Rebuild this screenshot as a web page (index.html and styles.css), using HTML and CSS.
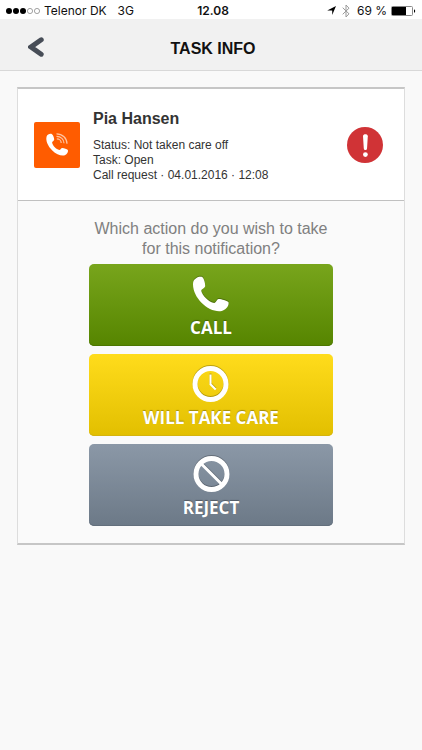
FILE: index.html
```html
<!DOCTYPE html>
<html lang="en">
<head>
<meta charset="utf-8">
<meta name="viewport" content="width=device-width, initial-scale=1">
<title>Task info</title>
<link rel="stylesheet" href="styles.css">
</head>
<body>
<div class="status-bar">
  <div class="status-left">
    <svg class="signal" viewBox="0 0 35 8" aria-hidden="true">
      <circle cx="3" cy="4" r="3"/><circle cx="10" cy="4" r="3"/><circle cx="17" cy="4" r="3"/>
      <circle class="empty" cx="24" cy="4" r="2.6"/><circle class="empty" cx="31" cy="4" r="2.6"/>
    </svg>
    <span>Telenor DK</span>
    <span class="network">3G</span>
  </div>
  <time class="clock">12.08</time>
  <div class="status-right">
    <svg class="location" viewBox="0 0 9 9" aria-hidden="true"><path d="M9 0 5.200 9V4.400H.2z"/></svg>
    <svg class="bluetooth" viewBox="0 0 8 14" aria-hidden="true"><path d="M.7 3.7 7 9.800 4 13V1l3 3.200L.7 10.300"/></svg>
    <span class="percent">69 %</span>
    <svg class="battery" viewBox="0 0 25 10" aria-hidden="true">
      <rect class="shell" x=".5" y=".5" width="21" height="9" rx="1"/>
      <rect x="1" y="1" width="14" height="8"/>
      <path d="M23 3.200c1.600.4 1.600 3.200 0 3.600z"/>
    </svg>
  </div>
</div>

<header class="title-bar">
  <button class="back" type="button" aria-label="Back">
    <svg viewBox="0 0 16 20" aria-hidden="true"><path d="M13.200 2.800 3 10l10.200 7.200"/></svg>
  </button>
  <h1>TASK INFO</h1>
</header>

<main class="card">
  <section class="task">
    <svg class="call-badge" viewBox="0 0 46 46" aria-hidden="true">
      <rect width="46" height="46" rx="2"/>
      <path class="handset" d="M12.600 14.400c.8-2.200 3.800-3.200 5.400-2.200 1.300 1.200 2.200 3.600 2.200 5.600-.3 1.400-2 1.600-2.100 2.800.6 3.400 4.200 7 7.200 7.400 1.300-.1 1.600-1.900 3-2 2 .1 4.400 1 5.600 2.100.5 2-.8 4.300-3 5.100-3.600 1-8.600-.8-12.600-4.800C14 24.200 11.400 18.600 12.600 14.400z"/>
      <path class="wave" d="M22.500 11.800c6 0 10.500 4.500 10.500 10M22.500 14.300c4.400 0 7.500 3.300 7.500 7M22.800 16.900c2.600 0 4.400 1.900 4.400 4"/>
    </svg>
    <div class="details">
      <h2>Pia Hansen</h2>
      <p>Status: Not taken care off</p>
      <p>Task: Open</p>
      <p>Call request · 04.01.2016 · 12:08</p>
    </div>
    <svg class="alert" viewBox="0 0 36 36" role="img" aria-label="Urgent">
      <circle cx="18" cy="18" r="18"/>
      <path d="M16 9.200c0-2.600 4.800-2.600 4.800 0l-.8 12.200c-.2 2-3 2-3.200 0z"/>
      <circle class="dot" cx="18.400" cy="27.600" r="2.400"/>
    </svg>
  </section>

  <section class="actions">
    <p class="question">Which action do you wish to take<br>for this notification?</p>
    <button class="action call" type="button">
      <svg viewBox="0 0 38 38" aria-hidden="true"><path class="solid" d="M1.200 7C2.500 3 7.500.8 10.500 2.200c1.700 2 2.900 6 2.600 9.300-.8 2-3.700 2.500-3.900 4.200.9 4.800 7.600 11.300 13 12.400 2-.2 2.400-3.500 4.300-4 3.200.1 8 1.600 10 3.200.7 3.800-2.700 7.600-6.800 8.600-6.200 1.300-14.400-2.300-20.200-8.200C3.800 22 .1 14 1.200 7z"/></svg>
      <span>CALL</span>
    </button>
    <button class="action care" type="button">
      <svg viewBox="0 0 38 38" aria-hidden="true"><circle cx="18.500" cy="19" r="15.500"/><path class="hand" d="M18.500 9.500v9.800l5.200 5.200"/></svg>
      <span>WILL TAKE CARE</span>
    </button>
    <button class="action reject" type="button">
      <svg viewBox="0 0 38 38" aria-hidden="true"><circle cx="19.500" cy="19" r="15.500"/><path class="bar" d="M9 8.500l21 21"/></svg>
      <span>REJECT</span>
    </button>
  </section>
</main>
</body>
</html>
```

FILE: styles.css
```css
* {
  box-sizing: border-box;
}

body {
  margin: 0;
  min-height: 100vh;
  background: #f9f9f9;
  color: #333;
  font-family: "Liberation Sans", Arial, sans-serif;
}

h1, h2, p {
  margin: 0;
}

button {
  border: 0;
  cursor: pointer;
}

svg {
  display: block;
  flex: none;
}

.status-bar {
  display: grid;
  grid-template-columns: 1fr auto 1fr;
  align-items: center;
  height: 19px;
  padding: 2px 6px 0;
  background: #fff;
  color: #111;
  font: 12px/16px Inter, sans-serif;
}

.status-left,
.status-right {
  display: flex;
  align-items: center;
}

.status-right {
  justify-content: flex-end;
}

.signal {
  width: 35px;
  height: 8px;
  margin-right: 3px;
}

.signal .empty {
  fill: none;
  stroke: #666;
  stroke-width: .6;
}

.network {
  margin-left: 11px;
}

.clock {
  padding-left: 4px;
  font-weight: 600;
}

.location {
  width: 9px;
  height: 9px;
  margin-right: 6px;
}

.bluetooth {
  width: 8px;
  height: 14px;
  margin-right: 7px;
  fill: none;
  stroke: #999;
}

.percent {
  margin-right: 4px;
}

.battery {
  width: 25px;
  height: 10px;
}

.battery .shell {
  fill: none;
  stroke: #888;
}

.title-bar {
  display: grid;
  grid-template-columns: 48px 1fr 44px;
  align-items: center;
  height: 52px;
  padding: 0 2px;
  border-bottom: 1px solid #d8d8d8;
  background: #f1f1f1;
}

.title-bar h1 {
  padding-top: 8px;
  color: #111;
  font-size: 16px;
  line-height: 20px;
  text-align: center;
}

.back {
  display: flex;
  justify-content: flex-end;
  padding: 4px 6px 0 0;
  background: none;
}

.back svg {
  width: 16px;
  height: 20px;
  fill: none;
  stroke: #474d57;
  stroke-width: 5;
  stroke-linecap: round;
}

.card {
  margin: 16px 17px;
  border: 1px solid #ddd;
  border-top: 2px solid #c6c6c6;
  border-bottom: 2px solid #c6c6c6;
  background: #fafafa;
}

.task {
  display: flex;
  align-items: center;
  padding: 18px 21px 17px 16px;
  border-bottom: 1px solid #c0c0c0;
  background: #fff;
}

.call-badge {
  width: 46px;
  height: 46px;
  margin-right: 13px;
  fill: #ff5c00;
}

.call-badge .handset {
  fill: #fff;
}

.call-badge .wave {
  fill: none;
  stroke: #ffc4a0;
  stroke-width: 1.2;
}

.details {
  flex: 1;
  padding-top: 1px;
  font-size: 12px;
  line-height: 15px;
}

.details h2 {
  margin-bottom: 8px;
  font-size: 16px;
  line-height: 22px;
}

.alert {
  width: 36px;
  height: 36px;
  fill: #d03336;
}

.alert path,
.alert .dot {
  fill: #fff;
}

.actions {
  display: flex;
  flex-direction: column;
  align-items: center;
  gap: 8px;
  padding: 18px 24px 17px;
}

.question {
  margin-bottom: -3px;
  color: #808080;
  font-size: 16px;
  line-height: 20px;
  text-align: center;
}

.action {
  display: flex;
  flex-direction: column;
  align-items: center;
  gap: 4px;
  width: 72%;
  height: 82px;
  padding: 11px 0 0;
  border-radius: 5px;
  color: #fff;
  font: 700 17px/22px "Open Sans", sans-serif;
  text-shadow: 0 -1px 1px rgba(0, 0, 0, .3);
}

.action svg {
  width: 38px;
  height: 38px;
  fill: none;
  stroke: #fff;
  stroke-width: 5;
  filter: drop-shadow(0 -1px 0 rgba(0, 0, 0, .25));
}

.action .solid {
  fill: #fff;
  stroke: none;
}

.action .hand {
  stroke-width: 2;
}

.action .bar {
  stroke-width: 3;
}

.call {
  background: linear-gradient(#78a51c, #568500);
  box-shadow: inset 0 -1px 0 #4c7600;
}

.care {
  background: linear-gradient(#ffdc1c, #e2bf00);
  box-shadow: inset 0 -1px 0 #d5b40e;
}

.reject {
  background: linear-gradient(#8b98a7, #6c7987);
  box-shadow: inset 0 -1px 0 #636f7c;
}
```
